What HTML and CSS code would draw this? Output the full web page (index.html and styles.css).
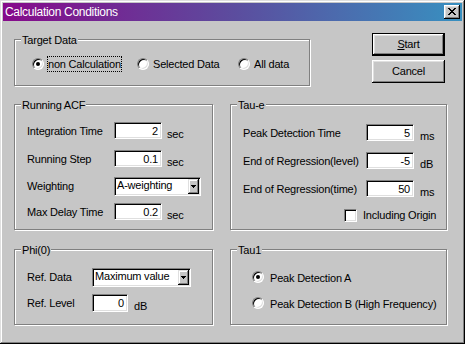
FILE: index.html
```html
<!DOCTYPE html>
<html>
<head>
<meta charset="utf-8">
<link rel="stylesheet" href="styles.css">
</head>
<body>
<div class="window">
  <div class="titlebar">
    <span class="title">Calculation Conditions</span>
    <div class="close"><svg class="xicon" width="8" height="7" viewBox="0 0 8 7"><path fill="#000" d="M0 0h2v1H0zM6 0h2v1H6zM1 1h2v1H1zM5 1h2v1H5zM2 2h4v1H2zM3 3h2v1H3zM2 4h4v1H2zM1 5h2v1H1zM5 5h2v1H5zM0 6h2v1H0zM6 6h2v1H6z"/></svg></div>
  </div>
  <div class="content">
    <div class="row row1">
      <div class="group g-target">
        <div class="legend">Target Data</div>
        <div class="radios">
          <div class="opt opt1"><span class="radio checked"></span><span class="rlabel focus">non Calculation</span></div>
          <div class="opt opt2"><span class="radio"></span><span class="rlabel">Selected Data</span></div>
          <div class="opt opt3"><span class="radio"></span><span class="rlabel">All data</span></div>
        </div>
      </div>
      <div class="buttons">
        <div class="btn default"><span><u>S</u>tart</span></div>
        <div class="btn"><span>Cancel</span></div>
      </div>
    </div>

    <div class="row row2">
      <div class="group g-acf">
        <div class="legend">Running ACF</div>
        <div class="frow r1"><span class="flabel">Integration Time</span><span class="edit">2</span><span class="unit">sec</span></div>
        <div class="frow r2"><span class="flabel">Running Step</span><span class="edit">0.1</span><span class="unit">sec</span></div>
        <div class="frow r3"><span class="flabel">Weighting</span>
          <div class="combo w-acf"><span class="combo-text">A-weighting</span><span class="combo-btn"><svg width="5" height="3" viewBox="0 0 5 3"><path fill="#000" d="M0 0h5v1H0zM1 1h3v1H1zM2 2h1v1H2z"/></svg></span></div>
        </div>
        <div class="frow r4"><span class="flabel">Max Delay Time</span><span class="edit">0.2</span><span class="unit">sec</span></div>
      </div>
      <div class="group g-taue">
        <div class="legend">Tau-e</div>
        <div class="frow t1"><span class="flabel">Peak Detection Time</span><span class="edit">5</span><span class="unit">ms</span></div>
        <div class="frow t2"><span class="flabel">End of Regression(level)</span><span class="edit">-5</span><span class="unit">dB</span></div>
        <div class="frow t3"><span class="flabel">End of Regression(time)</span><span class="edit">50</span><span class="unit">ms</span></div>
        <div class="chkrow"><span class="check"></span><span class="clabel">Including Origin</span></div>
      </div>
    </div>

    <div class="row row3">
      <div class="group g-phi">
        <div class="legend">Phi(0)</div>
        <div class="frow p1"><span class="flabel">Ref. Data</span>
          <div class="combo w-phi"><span class="combo-text">Maximum value</span><span class="combo-btn"><svg width="5" height="3" viewBox="0 0 5 3"><path fill="#000" d="M0 0h5v1H0zM1 1h3v1H1zM2 2h1v1H2z"/></svg></span></div>
        </div>
        <div class="frow p2"><span class="flabel">Ref. Level</span><span class="edit small">0</span><span class="unit">dB</span></div>
      </div>
      <div class="group g-tau1">
        <div class="legend">Tau1</div>
        <div class="trow q1"><span class="radio checked"></span><span class="tlabel">Peak Detection A</span></div>
        <div class="trow q2"><span class="radio"></span><span class="tlabel">Peak Detection B (High Frequency)</span></div>
      </div>
    </div>
  </div>
</div>
</body>
</html>
```

FILE: styles.css
```css
html, body {
  margin: 0;
  padding: 0;
}
body {
  width: 465px;
  height: 344px;
  overflow: hidden;
  font-family: "Liberation Sans", Arial, sans-serif;
  font-size: 11px;
  letter-spacing: -0.2px;
  color: #000;
}
.window {
  box-sizing: border-box;
  width: 465px;
  height: 344px;
  padding: 3px;
  background: #c6c6c6;
  box-shadow: inset -1px -1px 0 #000, inset 1px 1px 0 #dfdfdf, inset -2px -2px 0 #808080, inset 2px 2px 0 #fff;
}
.titlebar {
  height: 18px;
  display: flex;
  align-items: center;
  justify-content: space-between;
  padding: 0 2px;
  background: linear-gradient(90deg, #860a8a 0%, #5c4c9e 50%, #3890c0 100%);
}
.title {
  color: #fff;
  font-size: 12px;
  letter-spacing: -0.3px;
  line-height: 18px;
}
.close {
  width: 16px;
  height: 14px;
  box-sizing: border-box;
  background: #c6c6c6;
  box-shadow: inset -1px -1px 0 #000, inset 1px 1px 0 #fff, inset -2px -2px 0 #808080, inset 2px 2px 0 #dfdfdf;
  display: flex;
  align-items: center;
  justify-content: center;
}
.xicon {
  display: block;
  margin-top: -1px;
}
.content {
  padding: 12px 0 0 11px;
}
.row {
  display: flex;
  align-items: flex-start;
}
.row2 { margin-top: 18px; }
.row3 { margin-top: 19px; }

.group {
  box-sizing: border-box;
  border: 1px solid #808080;
  box-shadow: 1px 1px 0 #fff, inset 1px 1px 0 #fff;
}
.legend {
  display: table;
  margin: -6px 0 0 6px;
  padding: 0 1px;
  line-height: 13px;
  background: #c6c6c6;
}
.g-target { width: 296px; height: 47px; margin-top: 6px; }
.g-acf { width: 199px; height: 126px; }
.g-taue { width: 217px; height: 126px; margin-left: 17px; }
.g-phi { width: 199px; height: 76px; }
.g-tau1 { width: 217px; height: 76px; margin-left: 17px; }

/* buttons */
.buttons {
  margin-left: 62px;
  display: flex;
  flex-direction: column;
  gap: 4px;
}
.btn {
  box-sizing: border-box;
  width: 73px;
  height: 23px;
  display: flex;
  align-items: center;
  justify-content: center;
  line-height: 13px;
  box-shadow: inset -1px -1px 0 #000, inset 1px 1px 0 #fff, inset -2px -2px 0 #808080, inset 2px 2px 0 #dfdfdf;
}
.btn.default {
  border: 1px solid #000;
}

/* radios */
.radios {
  display: flex;
  align-items: center;
  height: 16px;
  margin-top: 9px;
  padding-left: 17px;
}
.opt {
  display: flex;
  align-items: center;
}
.opt1 { width: 105px; }
.opt2 { width: 101px; }
.radio {
  flex: none;
  box-sizing: border-box;
  width: 12px;
  height: 12px;
  border-radius: 50%;
  background: #fff;
  border: 1px solid;
  border-color: #808080 #fff #fff #808080;
  box-shadow: inset 1px 1px 0 #000, inset -1px -1px 0 #dfdfdf;
  display: flex;
  align-items: center;
  justify-content: center;
}
.radio.checked::after {
  content: "";
  width: 4px;
  height: 4px;
  border-radius: 50%;
  background: #000;
}
.rlabel {
  margin-left: 4px;
  line-height: 14px;
  white-space: nowrap;
}
.rlabel.focus {
  margin-left: 3px;
  border: 1px dotted #000;
}

/* field rows */
.frow {
  display: flex;
  align-items: flex-start;
  padding-left: 12px;
}
.flabel {
  padding-top: 3px;
  line-height: 13px;
  white-space: nowrap;
}
.g-acf .flabel { width: 87px; }
.g-taue .flabel { width: 123px; }
.g-phi .flabel { width: 65px; }
.edit {
  box-sizing: border-box;
  width: 48px;
  height: 17px;
  padding: 2px 3px 0 0;
  line-height: 13px;
  text-align: right;
  background: #fff;
  border: 1px solid;
  border-color: #808080 #fff #fff #808080;
  box-shadow: inset 1px 1px 0 #000, inset -1px -1px 0 #dfdfdf;
}
.edit.small {
  width: 36px;
  height: 18px;
  padding-top: 2px;
}
.unit {
  padding-top: 6px;
  line-height: 13px;
  margin-left: 5px;
}
.g-taue .unit, .g-phi .unit { margin-left: 6px; }

.r1 { margin-top: 10px; }
.r2 { margin-top: 9px; }
.r3 { margin-top: 8px; }
.r4 { margin-top: 7px; }
.t1 { margin-top: 12px; }
.t2 { margin-top: 9px; }
.t3 { margin-top: 9px; }
.p1 { margin-top: 11px; }
.p2 { margin-top: 7px; }

/* combo */
.combo {
  box-sizing: border-box;
  height: 19px;
  display: flex;
  padding: 1px;
  background: #fff;
  border: 1px solid;
  border-color: #808080 #fff #fff #808080;
  box-shadow: inset 1px 1px 0 #000, inset -1px -1px 0 #dfdfdf;
}
.w-acf { width: 87px; }
.w-phi { width: 99px; }
.combo-text {
  flex: 1;
  padding-left: 1px;
  line-height: 13px;
  white-space: nowrap;
}
.combo-btn {
  flex: none;
  box-sizing: border-box;
  width: 11px;
  background: #c6c6c6;
  box-shadow: inset -1px -1px 0 #000, inset 1px 1px 0 #dfdfdf, inset -2px -2px 0 #808080, inset 2px 2px 0 #fff;
  display: flex;
  align-items: center;
  justify-content: center;
}
.combo-btn svg { display: block; }

/* checkbox */
.chkrow {
  display: flex;
  align-items: center;
  margin: 10px 0 0 113px;
}
.check {
  flex: none;
  box-sizing: border-box;
  width: 13px;
  height: 13px;
  background: #fff;
  border: 1px solid;
  border-color: #808080 #fff #fff #808080;
  box-shadow: inset 1px 1px 0 #000, inset -1px -1px 0 #dfdfdf;
}
.clabel {
  margin-left: 6px;
  line-height: 13px;
  margin-top: -1px;
  white-space: nowrap;
}

/* tau1 rows */
.trow {
  display: flex;
  align-items: center;
  height: 16px;
  padding-left: 21px;
}
.q1 { margin-top: 12px; }
.q2 { margin-top: 10px; }
.tlabel {
  margin-left: 6px;
  line-height: 16px;
  padding-top: 1px;
  white-space: nowrap;
}
```
